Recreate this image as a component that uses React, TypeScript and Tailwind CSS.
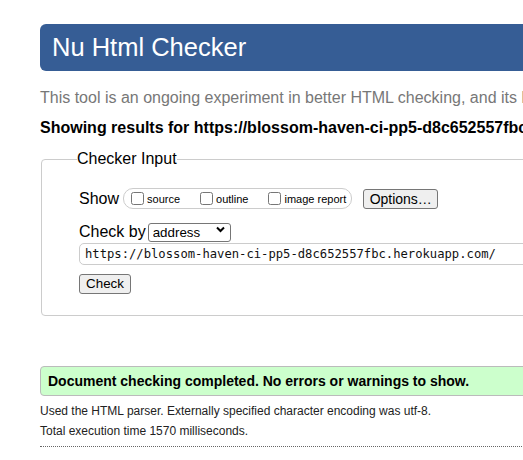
import React from "react";

const url = "https://blossom-haven-ci-pp5-d8c652557fbc.herokuapp.com/";

// チェックボックス＋ラベル
const ShowOption: React.FC<{ label: string }> = ({ label }) => (
    <label className="flex items-center gap-[3px]">
        <input type="checkbox" className="w-[13px] h-[13px] m-0" />
        <span className="text-[11px] leading-[13px] mt-[2px]">{label}</span>
    </label>
);

export default function App() {
    return (
        <div className="w-full h-[460px] overflow-hidden bg-white text-black font-['Liberation_Sans',Arial,sans-serif]">
            <div className="w-[1000px] pl-10 pt-6">
                <h1 className="h-[47px] flex items-center pl-3 rounded-md bg-[#365d95] text-white text-[25.5px]">
                    Nu Html Checker
                </h1>

                <p className="mt-[18px] text-[16px] leading-[18px] text-[#777] whitespace-nowrap">
                    This tool is an ongoing experiment in better HTML checking, and its behavior remains subject to change
                </p>
                <p className="mt-3 text-[16px] leading-[18px] font-bold whitespace-nowrap">
                    Showing results for {url}
                </p>

                <fieldset className="mt-[13px] ml-px w-[900px] border border-[#ccc] rounded pl-[35px] pt-5 pb-5">
                    <legend className="text-[16px] leading-[18px] p-0">
                        Checker Input
                    </legend>
                    <div className="pl-[2px] flex flex-col">
                        {/* Show */}
                        <div className="flex items-center h-[21px]">
                            <span className="text-[16px] leading-[18px]">Show</span>
                            <div className="ml-1 h-[21px] flex items-center gap-5 pl-[7px] pr-[5px] border border-[#ccc] rounded-[10px]">
                                <ShowOption label="source" />
                                <ShowOption label="outline" />
                                <ShowOption label="image report" />
                            </div>
                            <button
                                type="button"
                                className="ml-[11px] w-[75px] h-[20px] border border-[#767676] rounded-[3px] bg-[#efefef] text-[14px] leading-none"
                            >
                                Options…
                            </button>
                        </div>

                        {/* Check by */}
                        <div className="mt-[13px] flex items-center h-[19px]">
                            <span className="text-[16px] leading-[18px]">Check by</span>
                            <div className="relative ml-[2px]">
                                <select className="appearance-none w-[83px] h-[19px] border border-[#767676] rounded-[3px] bg-white pl-1 text-[13.333px] leading-none">
                                    <option>address</option>
                                </select>
                                <svg
                                    className="absolute right-[6px] top-[6px] w-[9px] h-[7px] pointer-events-none"
                                    viewBox="0 0 9 7"
                                    fill="none"
                                    stroke="#000"
                                    strokeWidth="2"
                                >
                                    <path d="M1 1.5l3.5 3.5 3.5-3.5" />
                                </svg>
                            </div>
                        </div>

                        <input
                            type="text"
                            readOnly
                            value={url}
                            className="mt-[2px] w-[820px] h-[22px] border border-[#ccc] rounded-[5px] px-[5px] text-[12.2px] text-[#111] font-['DejaVu_Sans_Mono',monospace]"
                        />

                        <div className="mt-[6px]">
                            <button
                                type="button"
                                className="w-[52px] h-[20px] border border-[#767676] rounded-[3px] bg-[#efefef] text-[13.333px] leading-none"
                            >
                                Check
                            </button>
                        </div>
                    </div>
                </fieldset>

                <div className="mt-[50px] h-[30px] flex items-center pl-[7px] border border-[#bbb] rounded bg-[#ccffcc] text-[14px] font-bold whitespace-nowrap">
                    Document checking completed. No errors or warnings to show.
                </div>

                <div className="mt-[5px] text-[12px] leading-[20px] text-[#222]">
                    <p>Used the HTML parser. Externally specified character encoding was utf-8.</p>
                    <p>Total execution time 1570 milliseconds.</p>
                </div>
                <div className="mt-[5px] border-t border-dotted border-[#666]" />
            </div>
        </div>
    );
}
